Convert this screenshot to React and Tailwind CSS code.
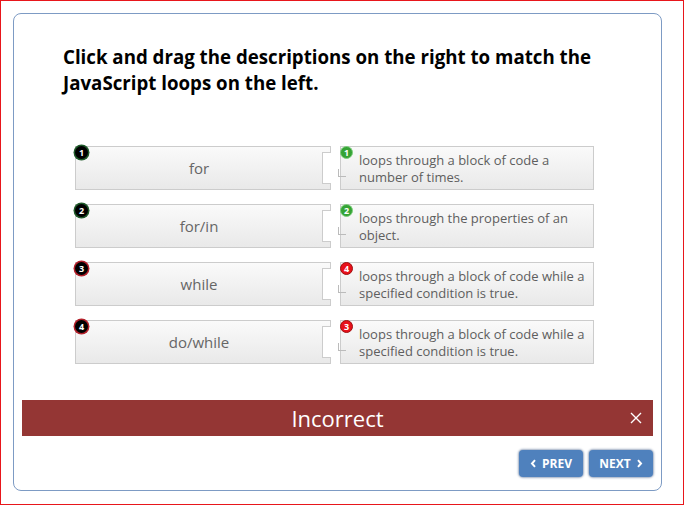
const loops = [
  { name: "for", num: 1, ring: "#1f5a2a", desc: "loops through a block of code a number of times.", answer: 1, ok: true },
  { name: "for/in", num: 2, ring: "#1f5a2a", desc: "loops through the properties of an object.", answer: 2, ok: true },
  { name: "while", num: 3, ring: "#b3202a", desc: "loops through a block of code while a specified condition is true.", answer: 4, ok: false },
  { name: "do/while", num: 4, ring: "#b3202a", desc: "loops through a block of code while a specified condition is true.", answer: 3, ok: false },
];

function Chevron({ dir }) {
  return (
    <svg width="7" height="9" viewBox="0 0 7 9" className="inline-block">
      {dir === "left" ? (
        <path d="M5 1.2 L2 4.5 L5 7.8" fill="none" stroke="white" strokeWidth="2" />
      ) : (
        <path d="M2 1.2 L5 4.5 L2 7.8" fill="none" stroke="white" strokeWidth="2" />
      )}
    </svg>
  );
}

export default function App() {
  return (
    <div className="h-[505px] w-[684px] border border-[#e8161b] bg-white pl-[12px] pt-[12px] font-['Open_Sans',sans-serif]">
      <div className="flex h-[478px] w-[649px] flex-col rounded-[8px] border border-[#7d9bc4] bg-white">
        <h1 className="ml-[49px] mt-[30px] text-[18.7px] font-bold leading-[26px] text-black">
          Click and drag the descriptions on the right to match the
          <br />
          JavaScript loops on the left.
        </h1>

        <div className="ml-[61px] mt-[50px] flex flex-col gap-[14px]">
          {loops.map((row) => (
            <div key={row.name} className="flex h-[44px] gap-[9px]">
              <div className="relative flex w-[256px] items-center justify-center border border-[#cccccc] bg-gradient-to-b from-[#fafafa] to-[#e9e9e9] pr-[8px] text-[15px] text-[#666666]">
                {row.name}
                <span
                  className="absolute left-[-1px] top-[-1px] flex h-[13px] w-[13px] items-center justify-center rounded-full bg-black text-[9px] font-bold leading-none text-white"
                  style={{ boxShadow: `0 0 0 1.5px ${row.ring}` }}
                >
                  {row.num}
                </span>
                <span className="absolute right-[-1px] top-[5px] bottom-[5px] w-[9px] border-y border-l border-[#cccccc] bg-white" />
              </div>
              <div className="relative w-[254px] border border-[#cccccc] bg-gradient-to-b from-[#fafafa] to-[#e9e9e9] pl-[18px] pr-[6px] pt-[5px] text-[13px] leading-[17px] text-[#5e5e5e]">
                {row.desc}
                <span
                  className={
                    row.ok
                      ? "absolute left-[-1px] top-[-1px] flex h-[13px] w-[13px] items-center justify-center rounded-full border border-[#7fcf7f] bg-[#35a335] text-[9px] font-bold leading-none text-white"
                      : "absolute left-[-1px] top-[-1px] flex h-[13px] w-[13px] items-center justify-center rounded-full border border-[#9e1010] bg-[#e8101a] text-[9px] font-bold leading-none text-white"
                  }
                >
                  {row.answer}
                </span>
                <span className="absolute left-[-3px] top-[22px] h-[8px] w-[8px] border-b border-l border-[#bbbbbb]" />
              </div>
            </div>
          ))}
        </div>

        <div className="relative mx-[8px] mt-[36px] flex h-[36px] items-center justify-center bg-[#943634] text-[22px] text-white">
          Incorrect
          <svg width="12" height="12" viewBox="0 0 12 12" className="absolute right-[11px] top-[12px]">
            <path d="M1 1 L11 11 M11 1 L1 11" stroke="white" strokeWidth="1.4" />
          </svg>
        </div>

        <div className="mr-[8px] mt-[14px] flex justify-end gap-[6px]">
          <button className="flex h-[27px] w-[64px] items-center justify-center gap-[5px] rounded-[4px] bg-[#4f81bd] text-[12px] font-bold text-white shadow-[0_0_2px_1px_rgba(40,70,120,0.45)]">
            <Chevron dir="left" />
            PREV
          </button>
          <button className="flex h-[27px] w-[64px] items-center justify-center gap-[5px] rounded-[4px] bg-[#4f81bd] text-[12px] font-bold text-white shadow-[0_0_2px_1px_rgba(40,70,120,0.45)]">
            NEXT
            <Chevron dir="right" />
          </button>
        </div>
      </div>
    </div>
  );
}
